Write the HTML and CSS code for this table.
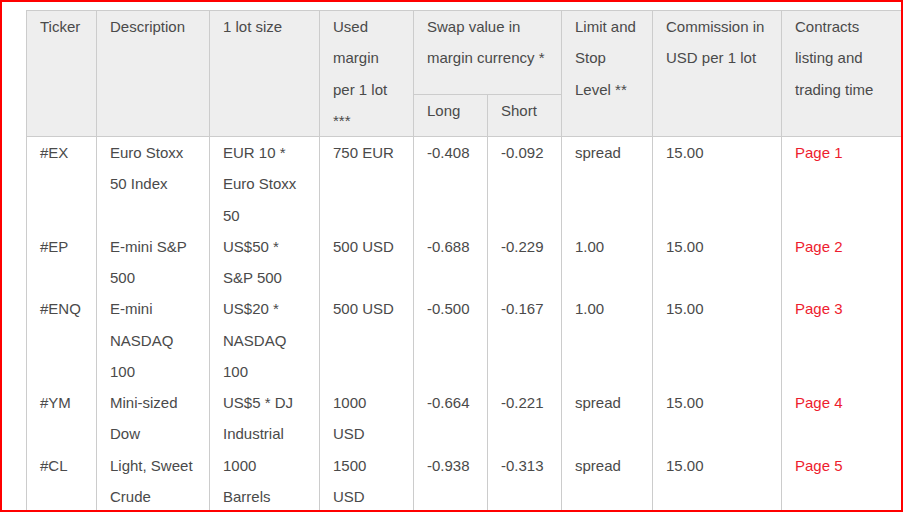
FILE: index.html
```html
<!DOCTYPE html>
<html>
<head>
<meta charset="utf-8">
<link rel="stylesheet" href="styles.css">
</head>
<body>
<div class="frame">
<table class="spec">
<colgroup>
<col class="c1"><col class="c2"><col class="c3"><col class="c4"><col class="c5"><col class="c6"><col class="c7"><col class="c8"><col class="c9">
</colgroup>
<thead>
<tr>
<th rowspan="2">Ticker</th>
<th rowspan="2">Description</th>
<th rowspan="2">1 lot size</th>
<th rowspan="2">Used margin per 1 lot ***</th>
<th colspan="2">Swap value in margin currency *</th>
<th rowspan="2">Limit and Stop Level **</th>
<th rowspan="2">Commission in USD per 1 lot</th>
<th rowspan="2">Contracts listing and trading time</th>
</tr>
<tr>
<th>Long</th>
<th>Short</th>
</tr>
</thead>
<tbody>
<tr>
<td>#EX</td><td>Euro Stoxx 50 Index</td><td>EUR 10 * Euro Stoxx 50</td><td>750 EUR</td><td>-0.408</td><td>-0.092</td><td>spread</td><td>15.00</td><td><a href="#">Page 1</a></td>
</tr>
<tr>
<td>#EP</td><td>E-mini S&amp;P 500</td><td>US$50 * S&amp;P 500</td><td>500 USD</td><td>-0.688</td><td>-0.229</td><td>1.00</td><td>15.00</td><td><a href="#">Page 2</a></td>
</tr>
<tr>
<td>#ENQ</td><td>E-mini NASDAQ 100</td><td>US$20 * NASDAQ 100</td><td>500 USD</td><td>-0.500</td><td>-0.167</td><td>1.00</td><td>15.00</td><td><a href="#">Page 3</a></td>
</tr>
<tr>
<td>#YM</td><td>Mini-sized Dow</td><td>US$5 * DJ Industrial</td><td>1000 USD</td><td>-0.664</td><td>-0.221</td><td>spread</td><td>15.00</td><td><a href="#">Page 4</a></td>
</tr>
<tr>
<td>#CL</td><td>Light, Sweet Crude</td><td>1000 Barrels</td><td>1500 USD</td><td>-0.938</td><td>-0.313</td><td>spread</td><td>15.00</td><td><a href="#">Page 5</a></td>
</tr>
</tbody>
</table>
</div>
</body>
</html>
```
FILE: styles.css
```css
html, body {
  margin: 0;
  padding: 0;
  background: #fff;
}
.frame {
  width: 903px;
  height: 512px;
  box-sizing: border-box;
  border: 2px solid #ff0000;
  padding: 8px 0 0 24px;
  overflow: hidden;
  font-family: "Liberation Sans", Arial, sans-serif;
  font-size: 15px;
  color: #4a4a4a;
}
.spec {
  width: 875px;
  table-layout: fixed;
  border-collapse: collapse;
  line-height: 31.25px;
}
.c1 { width: 70px; }
.c2 { width: 113px; }
.c3 { width: 110px; }
.c4 { width: 94px; }
.c5 { width: 74px; }
.c6 { width: 74px; }
.c7 { width: 91px; }
.c8 { width: 129px; }
.c9 { width: 120px; }
.spec th {
  background: #eeeeee;
  border: 1px solid #cccccc;
  font-weight: normal;
  text-align: left;
  vertical-align: top;
  padding: 0 13px;
}
.spec td {
  border-left: 1px solid #cccccc;
  border-right: 1px solid #cccccc;
  vertical-align: top;
  padding: 0 13px;
}
.spec a {
  color: #ee1c2e;
  text-decoration: none;
}
```
